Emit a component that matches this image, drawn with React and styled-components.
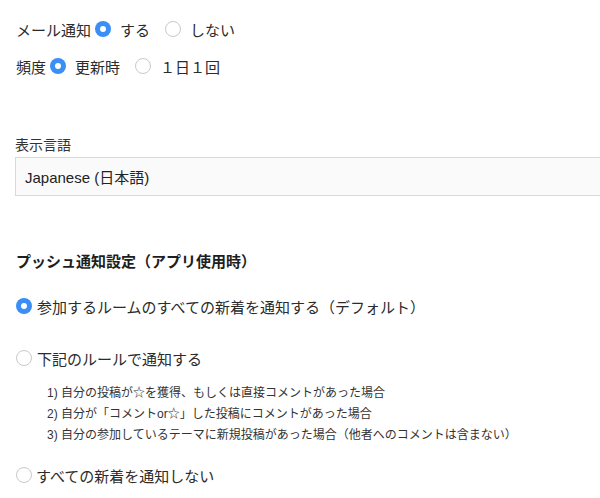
import React, { useState } from 'react';
import styled, { createGlobalStyle } from 'styled-components';

const GlobalStyle = createGlobalStyle`
  html, body {
    margin: 0;
    padding: 0;
    background: #fff;
  }
  body {
    font-family: "Liberation Sans", "Noto Sans CJK JP", sans-serif;
    color: #2b2b2b;
  }
`;

const Page = styled.div`
  padding: 14px 0 0 16px;
  width: 600px;
  box-sizing: border-box;
`;

const Row = styled.div`
  display: flex;
  align-items: center;
  height: 30px;
  font-size: 15px;
  margin-top: ${(p) => p.$top || 0}px;
`;

const RowLabel = styled.span`
  margin-right: 4px;
`;

const Option = styled.label`
  display: flex;
  align-items: center;
  margin-right: 15px;
  cursor: pointer;
`;

const Radio = styled.span`
  width: 16px;
  height: 16px;
  box-sizing: border-box;
  border-radius: 50%;
  flex-shrink: 0;
  margin-right: ${(p) => p.$gap ?? 9}px;
  background: ${(p) => (p.$on ? '#3a8ef6' : '#fff')};
  border: ${(p) => (p.$on ? 'none' : '1px solid #c9c9c9')};
  display: flex;
  align-items: center;
  justify-content: center;

  &::after {
    content: '';
    display: ${(p) => (p.$on ? 'block' : 'none')};
    width: 6px;
    height: 6px;
    border-radius: 50%;
    background: #fff;
  }
`;

const FieldLabel = styled.div`
  margin: 54px 0 2px -1px;
  font-size: 14px;
  line-height: 20px;
  color: #333;
`;

const SelectBox = styled.div`
  margin-left: -1px;
  height: 39px;
  box-sizing: border-box;
  background: #fafafa;
  border: 1px solid #d9d9d9;
  border-right: none;
  display: flex;
  align-items: center;
  padding-left: 9px;
  font-size: 15px;
  color: #222;
`;

const Heading = styled.div`
  margin-top: 56px;
  font-size: 15px;
  line-height: 20px;
  font-weight: bold;
  color: #1e1e1e;
`;

const RuleList = styled.ol`
  list-style: none;
  margin: 10px 0 0 31px;
  padding: 0;
  font-size: 12px;
  line-height: 21px;
  color: #333;
`;

export default function App() {
  const [mail, setMail] = useState('on');
  const [freq, setFreq] = useState('update');
  const [push, setPush] = useState('all');

  return (
    <Page>
      <GlobalStyle />
      <Row>
        <RowLabel>メール通知</RowLabel>
        <Option onClick={() => setMail('on')}>
          <Radio $on={mail === 'on'} />する
        </Option>
        <Option onClick={() => setMail('off')}>
          <Radio $on={mail === 'off'} />しない
        </Option>
      </Row>
      <Row $top={7}>
        <RowLabel>頻度</RowLabel>
        <Option onClick={() => setFreq('update')}>
          <Radio $on={freq === 'update'} />更新時
        </Option>
        <Option onClick={() => setFreq('daily')}>
          <Radio $on={freq === 'daily'} />１日１回
        </Option>
      </Row>

      <FieldLabel>表示言語</FieldLabel>
      <SelectBox>Japanese (日本語)</SelectBox>

      <Heading>プッシュ通知設定（アプリ使用時）</Heading>

      <Row $top={19}>
        <Option onClick={() => setPush('all')}>
          <Radio $on={push === 'all'} $gap={5} />参加するルームのすべての新着を通知する（デフォルト）
        </Option>
      </Row>
      <Row $top={22}>
        <Option onClick={() => setPush('rules')}>
          <Radio $on={push === 'rules'} $gap={5} />下記のルールで通知する
        </Option>
      </Row>
      <RuleList>
        <li>1) 自分の投稿が☆を獲得、もしくは直接コメントがあった場合</li>
        <li>2) 自分が「コメントor☆」した投稿にコメントがあった場合</li>
        <li>3) 自分の参加しているテーマに新規投稿があった場合（他者へのコメントは含まない）</li>
      </RuleList>
      <Row $top={14}>
        <Option onClick={() => setPush('none')}>
          <Radio $on={push === 'none'} $gap={4} />すべての新着を通知しない
        </Option>
      </Row>
    </Page>
  );
}
